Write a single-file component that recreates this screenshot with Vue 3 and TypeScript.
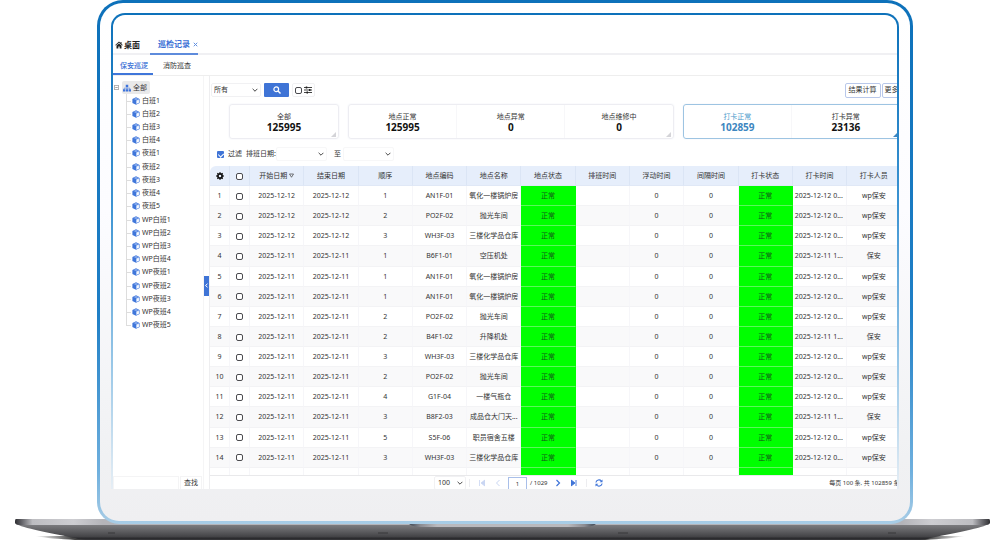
<script setup lang="ts">
import { ref } from 'vue'

interface PatrolRow {
  no: number | string
  start: string
  end: string
  order: number | string
  code: string
  name: string
  punch: string
  person: string
}

const treeItems: string[] = [
  '白班1', '白班2', '白班3', '白班4',
  '夜班1', '夜班2', '夜班3', '夜班4', '夜班5',
  'WP白班1', 'WP白班2', 'WP白班3', 'WP白班4',
  'WP夜班1', 'WP夜班2', 'WP夜班3', 'WP夜班4', 'WP夜班5',
]

const columns: string[] = [
  '开始日期', '结束日期', '顺序', '地点编码', '地点名称', '地点状态',
  '排班时间', '浮动时间', '间隔时间', '打卡状态', '打卡时间', '打卡人员',
]

const early = '2025-12-11 1...'
const late = '2025-12-12 0...'

const source: [string, number, string, string, string, string][] = [
  ['2025-12-12', 1, 'AN1F-01', '氧化一楼锅炉房', late, 'wp保安'],
  ['2025-12-12', 2, 'PO2F-02', '抛光车间', late, 'wp保安'],
  ['2025-12-12', 3, 'WH3F-03', '三楼化学品仓库', late, 'wp保安'],
  ['2025-12-11', 1, 'B6F1-01', '空压机处', early, '保安'],
  ['2025-12-11', 1, 'AN1F-01', '氧化一楼锅炉房', late, 'wp保安'],
  ['2025-12-11', 1, 'AN1F-01', '氧化一楼锅炉房', late, 'wp保安'],
  ['2025-12-11', 2, 'PO2F-02', '抛光车间', late, 'wp保安'],
  ['2025-12-11', 2, 'B4F1-02', '升降机处', early, '保安'],
  ['2025-12-11', 3, 'WH3F-03', '三楼化学品仓库', late, 'wp保安'],
  ['2025-12-11', 2, 'PO2F-02', '抛光车间', late, 'wp保安'],
  ['2025-12-11', 4, 'G1F-04', '一楼气瓶仓', late, 'wp保安'],
  ['2025-12-11', 3, 'B8F2-03', '成品仓大门天...', early, '保安'],
  ['2025-12-11', 5, 'S5F-06', '职员宿舍五楼', late, 'wp保安'],
  ['2025-12-11', 3, 'WH3F-03', '三楼化学品仓库', late, 'wp保安'],
]

const rows: PatrolRow[] = source.map(([date, order, code, name, punch, person], i) => ({
  no: i + 1, start: date, end: date, order, code, name, punch, person,
}))

const cards = [
  { size: 'one', active: false, items: [{ label: '全部', value: '125995' }] },
  {
    size: 'three',
    active: false,
    items: [
      { label: '地点正常', value: '125995' },
      { label: '地点异常', value: '0' },
      { label: '地点维修中', value: '0' },
    ],
  },
  {
    size: 'two',
    active: true,
    items: [
      { label: '打卡正常', value: '102859' },
      { label: '打卡异常', value: '23136' },
    ],
  },
]

const filterOn = ref(true)
const page = ref('1')
</script>

<template>
  <div class="device">
    <div class="lid">
      <main class="screen">
        <nav class="tabs" aria-label="页面">
          <a href="#" class="tab home">
            <svg class="i8" viewBox="0 0 16 16"><path d="M8 1 0.5 8l1 1.2L8 3.4l6.500 5.800 1-1.200L13 5.600V2h-2v1.800zM8 4.800 3 9.200V15h3.700v-4h2.600v4H13V9.200z" fill="#222" /></svg>
            <span>桌面</span>
          </a>
          <a href="#" class="tab current"><span>巡检记录</span>
            <svg class="i5" viewBox="0 0 10 10"><path d="M1.500 1.500l7 7M8.500 1.500l-7 7" stroke="#5f8fe0" stroke-width="2" /></svg>
          </a>
        </nav>
        <nav class="subtabs" aria-label="巡查类型">
          <a href="#" class="subtab on">保安巡逻</a>
          <a href="#" class="subtab">消防巡查</a>
        </nav>

        <div class="body">
          <aside class="side">
            <div class="root">
              <svg class="i5" viewBox="0 0 10 10"><path d="M.7.7h8.600v8.600H.7zM2.500 5h5" fill="none" stroke="#777" stroke-width="1.300" /></svg>
              <span class="rootlabel">
                <svg class="i8" viewBox="0 0 16 16"><path d="M5.500 1.500h5v4.500h-5zM0 10.500h4.600V15H0zM5.700 10.500h4.600V15H5.700zM11.400 10.500H16V15h-4.600z" fill="#3c73dc" /><path d="M8 5v6M2.300 11V8.200h11.400V11" fill="none" stroke="#3c73dc" stroke-width="1.200" /></svg>
                <span>全部</span>
              </span>
            </div>
            <ul class="tree">
              <li v-for="t in treeItems" :key="t">
                <svg class="i8" viewBox="0 0 16 16"><path d="M8 .6 15.200 3.800v8.400L8 15.600.8 12.200V3.800z" fill="#3f76da" /><path d="M8.500 7.200 14.200 4.700v6.900L8.500 14.200z" fill="#dbe7fb" /><path d="M10 9.200l3-1.300v3.200l-3 1.400z" fill="#fff" /><path d="M3 4.100 8 2l5 2.100L8 6.200z" fill="#8fb1ee" /></svg>
                <span>{{ t }}</span>
              </li>
            </ul>
            <form class="find" @submit.prevent>
              <input type="text" aria-label="查找内容" />
              <button type="submit">查找</button>
            </form>
          </aside>

          <div class="splitter">
            <button type="button" class="collapse" aria-label="收起">
              <svg class="i5" viewBox="0 0 10 10"><path d="M7 1.500 3 5l4 3.500" fill="none" stroke="#fff" stroke-width="2" /></svg>
            </button>
          </div>

          <section class="main">
            <div class="toolbar">
              <span class="select wide">
                <select aria-label="范围"><option>所有</option></select>
                <svg class="chev" viewBox="0 0 10 10"><path d="M1 3l4 4 4-4" fill="none" stroke="#444" stroke-width="1.600" /></svg>
              </span>
              <button type="button" class="search" aria-label="搜索">
                <svg class="i8" viewBox="0 0 16 16"><circle cx="6.500" cy="6.500" r="4.700" fill="none" stroke="#fff" stroke-width="2.400" /><path d="M10 10l5 5" stroke="#fff" stroke-width="2.800" /></svg>
              </button>
              <span class="options">
                <input type="checkbox" class="box" aria-label="多选" />
                <button type="button" class="plain" aria-label="设置">
                  <svg class="i8" viewBox="0 0 16 16"><path d="M0 3h16M0 8h16M0 13h16" stroke="#222" stroke-width="1.700" /><path d="M3.500 1h3v4h-3zM10 6h3v4h-3zM5 11h3v4H5z" fill="#222" /></svg>
                </button>
              </span>
              <span class="grow"></span>
              <button type="button" class="outline">结果计算</button>
              <button type="button" class="outline">更多</button>
            </div>

            <div class="cards">
              <div v-for="c in cards" :key="c.size" class="card" :class="[c.size, { active: c.active }]">
                <div v-for="(s, i) in c.items" :key="s.label" class="stat" :class="{ chosen: c.active && i === 0 }">
                  <span class="label">{{ s.label }}</span>
                  <strong>{{ s.value }}</strong>
                </div>
              </div>
            </div>

            <div class="filters">
              <label class="check"><input v-model="filterOn" type="checkbox" class="tick" /><span>过滤</span></label>
              <label for="from">排班日期:</label>
              <span class="select date">
                <select id="from"><option></option></select>
                <svg class="chev" viewBox="0 0 10 10"><path d="M1 3l4 4 4-4" fill="none" stroke="#444" stroke-width="1.600" /></svg>
              </span>
              <label for="to" class="to">至</label>
              <span class="select date last">
                <select id="to"><option></option></select>
                <svg class="chev" viewBox="0 0 10 10"><path d="M1 3l4 4 4-4" fill="none" stroke="#444" stroke-width="1.600" /></svg>
              </span>
            </div>

            <div class="gridview">
              <table>
                <colgroup><col class="narrow" /><col class="narrow" /><col v-for="c in columns" :key="c" /></colgroup>
                <thead>
                  <tr>
                    <th>
                      <svg class="i8" viewBox="0 0 16 16"><circle cx="8" cy="8" r="4.200" fill="none" stroke="#111" stroke-width="3.400" /><path d="M8 .5v3M8 12.500v3M.5 8h3M12.500 8h3M2.700 2.700l2 2M11.300 11.300l2 2M13.300 2.700l-2 2M4.700 11.300l-2 2" stroke="#111" stroke-width="2.800" /></svg>
                    </th>
                    <th><input type="checkbox" class="box" aria-label="全选" /></th>
                    <th v-for="(c, i) in columns" :key="c">{{ c }}<svg v-if="i === 0" class="sort" viewBox="0 0 10 10"><path d="M1 2h8L5 8.500z" fill="none" stroke="#333" stroke-width="1.300" /></svg></th>
                  </tr>
                </thead>
                <tbody>
                  <tr v-for="r in rows" :key="r.no">
                    <td>{{ r.no }}</td>
                    <td><input type="checkbox" class="box" :aria-label="`选择第${r.no}行`" /></td>
                    <td>{{ r.start }}</td>
                    <td>{{ r.end }}</td>
                    <td>{{ r.order }}</td>
                    <td>{{ r.code }}</td>
                    <td>{{ r.name }}</td>
                    <td class="ok">正常</td>
                    <td></td>
                    <td>0</td>
                    <td>0</td>
                    <td class="ok">正常</td>
                    <td class="left">{{ r.punch }}</td>
                    <td>{{ r.person }}</td>
                  </tr>
                  <tr>
                    <td></td>
                    <td><input type="checkbox" class="box" aria-label="选择第15行" /></td>
                    <td v-for="n in 12" :key="n" :class="{ ok: n === 6 || n === 10 }"></td>
                  </tr>
                </tbody>
              </table>
            </div>

            <div class="pager">
              <span class="select size">
                <select aria-label="每页条数"><option>100</option></select>
                <svg class="chev" viewBox="0 0 10 10"><path d="M1 3l4 4 4-4" fill="none" stroke="#444" stroke-width="1.600" /></svg>
              </span>
              <span class="bar"></span>
              <button type="button" class="plain" aria-label="首页" disabled><svg class="i8" viewBox="0 0 16 16"><path d="M3 2v12M13 2.500 6 8l7 5.500zM13 2v12" fill="#c9d6f3" stroke="#c9d6f3" stroke-width="1.600" /></svg></button>
              <button type="button" class="plain" aria-label="上一页" disabled><svg class="i8" viewBox="0 0 16 16"><path d="M11 2 5 8l6 6" fill="none" stroke="#c9d6f3" stroke-width="2" /></svg></button>
              <input v-model="page" type="text" class="page" aria-label="页码" />
              <span class="total">/ 1029</span>
              <button type="button" class="plain" aria-label="下一页"><svg class="i8" viewBox="0 0 16 16"><path d="M5 2l6 6-6 6" fill="none" stroke="#3f74d8" stroke-width="2.400" /></svg></button>
              <button type="button" class="plain" aria-label="末页"><svg class="i8" viewBox="0 0 16 16"><path d="M12 2v12M3 2.500 10 8l-7 5.500zM3 2v12" fill="#3f74d8" stroke="#3f74d8" stroke-width="1.800" /></svg></button>
              <span class="bar"></span>
              <button type="button" class="plain" aria-label="刷新"><svg class="i8" viewBox="0 0 16 16"><path d="M1.800 7a6.300 6.300 0 0 1 11-3M14.200 9a6.300 6.300 0 0 1-11 3" fill="none" stroke="#3f74d8" stroke-width="2.200" /><path d="M15 .8v5.700H9.300zM1 15.200V9.500h5.700z" fill="#3f74d8" /></svg></button>
              <span class="grow"></span>
              <span class="summary">每页 100 条, 共 102859 条</span>
            </div>
          </section>
        </div>
      </main>
    </div>

    <svg class="base" viewBox="0 0 1000 26" preserveAspectRatio="none" aria-hidden="true">
      <defs>
        <linearGradient id="edge" x1="0" x2="1" y1="0" y2="0">
          <stop offset="0" stop-color="#2f2f33" /><stop offset="0.008" stop-color="#6b6b70" /><stop offset="0.018" stop-color="#bdbdc1" />
          <stop offset="0.060" stop-color="#cdcdd1" /><stop offset="0.090" stop-color="#b4b4b9" /><stop offset="0.910" stop-color="#b4b4b9" />
          <stop offset="0.940" stop-color="#cdcdd1" /><stop offset="0.982" stop-color="#bdbdc1" /><stop offset="0.992" stop-color="#6b6b70" /><stop offset="1" stop-color="#2f2f33" />
        </linearGradient>
        <linearGradient id="hull" x1="0" x2="0" y1="0" y2="1">
          <stop offset="0" stop-color="#858588" /><stop offset="0.450" stop-color="#616164" /><stop offset="0.800" stop-color="#444447" /><stop offset="0.900" stop-color="#29292c" /><stop offset="1" stop-color="#3a3a3d" />
        </linearGradient>
        <linearGradient id="notch" x1="0" x2="1" y1="0" y2="0">
          <stop offset="0" stop-color="#3c4653" /><stop offset="0.060" stop-color="#8b8b90" /><stop offset="0.150" stop-color="#b9b9bd" />
          <stop offset="0.850" stop-color="#b9b9bd" /><stop offset="0.940" stop-color="#8b8b90" /><stop offset="1" stop-color="#3c4653" />
        </linearGradient>
        <linearGradient id="shade" x1="0" x2="1" y1="0" y2="0">
          <stop offset="0" stop-color="#555" stop-opacity="0" /><stop offset="0.040" stop-color="#444" /><stop offset="0.960" stop-color="#444" /><stop offset="1" stop-color="#555" stop-opacity="0" />
        </linearGradient>
      </defs>
      <path d="M35 18H965C955 20 940 21 925 22H75C60 21 45 20 35 18z" fill="url(#shade)" />
      <path d="M15 5C18 9 45 14 75 20Q80 22 90 22H915Q925 22 930 20C960 14 987 9 990 5z" fill="url(#hull)" />
      <path d="M16 1H989Q990 1 990 3V5Q989 7 986 7H19Q16 7 15 5V3Q15 1 16 1z" fill="url(#edge)" />
      <path d="M409 6H596C592 9 585 9 580 9H425C420 9 413 9 409 6z" fill="url(#notch)" />
      <path d="M108 15h7M378 15h10M618 15h10M888 15h8" stroke="#38383b" stroke-width="1" />
    </svg>
  </div>
</template>

<style>
body {
  background: #fff;
}
</style>

<style scoped>
* {
  box-sizing: border-box;
}

.device {
  display: flex;
  flex-direction: column;
  overflow: hidden;
  font-family: "Noto Sans", "Noto Sans CJK SC", sans-serif;
  font-size: 7px;
  line-height: 10px;
  color: #333;
}

.lid {
  position: relative;
  z-index: 1;
  margin: 0 8.750% 0 9.700%;
  padding: 10px 11px 32px;
  border: 3px solid transparent;
  border-radius: 26px 26px 22px 22px;
  background:
    linear-gradient(#fff, #fcfcff 40%, #f0f1f3 88%, #efeff1) padding-box,
    linear-gradient(#0d71ba, #1f7fc6 60%, #6fb0de 90%, #a9cde6) border-box;
}

.screen {
  overflow: hidden;
  padding-top: 20px;
  border: 2px solid transparent;
  border-bottom: 0;
  border-radius: 14px 14px 0 0;
  background:
    linear-gradient(#fff, #fff) padding-box,
    linear-gradient(#0d71ba, #3b93d2 40%, #9cc9e8 75%, #e6eef5) border-box;
}

a {
  color: inherit;
  text-decoration: none;
}

button,
input,
select {
  margin: 0;
  padding: 0;
  border: 0;
  background: none;
  color: inherit;
  font: inherit;
}

svg {
  display: block;
  flex: none;
}

.i8 {
  width: 8px;
  height: 8px;
}

.i5 {
  width: 5px;
  height: 5px;
}

.grow {
  flex: 1;
}

.tabs {
  display: flex;
  height: 20px;
  border-bottom: 2px solid #f0f0f3;
  font-size: 8px;
  font-weight: 700;
}

.tab {
  display: flex;
  align-items: center;
  gap: 1px;
  height: 20px;
  padding: 0 10px 0 2px;
  color: #222;
}

.tab.current {
  gap: 3px;
  padding: 0 0 0 8px;
  border-bottom: 2px solid #5e8bdc;
  color: #3d72d6;
}

.subtabs {
  display: flex;
  height: 21px;
  border-bottom: 1px solid #eee;
}

.subtab {
  display: flex;
  align-items: center;
  height: 20px;
  padding: 3px 5px 0 10px;
  border-bottom: 2px solid transparent;
}

.subtab.on {
  padding-left: 7px;
  border-color: #3f76da;
  color: #3d72d6;
  font-weight: 500;
}

.body {
  display: flex;
}

.side {
  display: flex;
  flex: none;
  flex-direction: column;
  width: 91px;
  padding-top: 5px;
  border-right: 1px solid #f5f5f6;
}

.root {
  display: flex;
  align-items: center;
  gap: 3px;
  padding-left: 1px;
}

.rootlabel {
  display: flex;
  align-items: center;
  gap: 2px;
  height: 13px;
  padding: 0 3px 0 1px;
  border-radius: 2px;
  background: #e9e9ea;
}

.tree {
  display: grid;
  grid-auto-rows: 1fr;
  height: 238px;
  margin: 0;
  padding: 0 0 0 13px;
  list-style: none;
}

.tree li {
  position: relative;
  display: flex;
  align-items: center;
  gap: 2px;
  padding-left: 6px;
  white-space: nowrap;
}

.tree li::before {
  content: "";
  position: absolute;
  left: 0;
  top: 0;
  width: 4px;
  height: 50%;
  border-left: 1px solid #ddd;
  border-bottom: 1px solid #ddd;
}

.tree li:not(:last-child)::after {
  content: "";
  position: absolute;
  left: 0;
  top: 50%;
  bottom: 0;
  border-left: 1px solid #ddd;
}

.find {
  display: flex;
  gap: 1px;
  margin-top: auto;
  height: 13px;
}

.find input {
  flex: 1;
  min-width: 0;
  border: 1px solid #f4f4f5;
  border-bottom: 0;
}

.find button {
  width: 22px;
  margin-right: 1px;
  border: 1px solid #f4f4f5;
  border-bottom: 0;
}

.splitter {
  display: flex;
  flex: none;
  align-items: center;
  width: 6px;
  border-right: 1px solid #eeeef0;
}

.collapse {
  display: flex;
  align-items: center;
  width: 5px;
  height: 20px;
  margin-top: 6px;
  flex: none;
  background: #3f74d6;
}

.main {
  flex: 1;
  min-width: 0;
}

.toolbar {
  display: flex;
  align-items: center;
  gap: 3px;
  height: 28px;
  margin-right: -5px;
  padding: 0 0 0 1px;
}

.select {
  position: relative;
  display: inline-flex;
  flex: none;
  height: 14px;
  border: 1px solid #f1f1f3;
  border-radius: 2px;
}

.select select {
  width: 100%;
  padding-left: 2px;
  appearance: none;
  outline: 0;
}

.chev {
  position: absolute;
  top: 3px;
  right: 2px;
  width: 6px;
  height: 6px;
  pointer-events: none;
}

.wide {
  width: 50px;
}

.search {
  display: flex;
  align-items: center;
  justify-content: center;
  width: 25px;
  height: 14px;
  border-radius: 1px;
  background: #3f74d6;
}

.options {
  display: flex;
  align-items: center;
  gap: 2px;
  height: 14px;
  padding: 0 2px;
  border: 1px solid #f1f1f3;
  border-radius: 2px;
}

.box {
  display: inline-block;
  width: 7px;
  height: 7px;
  border: 1px solid #4b4b4f;
  border-radius: 2px;
  background: #fff;
  appearance: none;
  vertical-align: middle;
}

.plain {
  display: flex;
  flex: none;
}

.outline {
  height: 15px;
  padding: 0 3px;
  border: 1px solid #b9c8ea;
  border-radius: 2px;
  white-space: nowrap;
}

.outline + .outline {
  margin-left: -2px;
  padding: 0 2px;
}

.cards {
  display: flex;
  gap: 9px;
  margin: 0 -4px 0 19px;
}

.card {
  position: relative;
  display: flex;
  height: 35px;
  border: 1px solid #ededf2;
  border-radius: 3px;
  box-shadow: 0 0 2px #eef0f6;
}

.card::after {
  content: "";
  position: absolute;
  right: 2px;
  bottom: 1px;
  border: solid transparent;
  border-width: 5px 0 0 5px;
  border-bottom: 5px solid #d4d4d8;
  border-top-width: 0;
}

.card.active {
  border-color: #9dc4e2;
}

.card.active::after {
  border-bottom-color: #3e86c0;
}

.one {
  flex: 1;
}

.three {
  flex: 3;
}

.two {
  flex: 2;
}

.stat {
  display: flex;
  flex: 1;
  flex-direction: column;
  align-items: center;
  padding-top: 7px;
}

.stat + .stat {
  border-left: 1px solid #f7f7f9;
}

.stat strong {
  font-size: 10px;
  line-height: 11px;
  color: #111;
}

.stat.chosen .label {
  color: #4d9acb;
}

.stat.chosen strong {
  color: #3e86c0;
}

.filters {
  display: flex;
  align-items: center;
  height: 27px;
  padding: 3px 0 0 7px;
}

.check {
  display: flex;
  align-items: center;
  gap: 4px;
  margin-right: 4px;
}

.tick {
  position: relative;
  width: 7px;
  height: 7px;
  border-radius: 1px;
  appearance: none;
}

.tick:checked {
  background: #3f74d6;
}

.tick:checked::after {
  content: "";
  position: absolute;
  left: 2px;
  top: 1px;
  width: 3px;
  height: 4px;
  border: solid #fff;
  border-width: 0 1px 1px 0;
  transform: rotate(45deg);
}

.date {
  width: 51px;
  border-color: #f7f7f8;
}

.to {
  margin: 0 2px 0 7px;
}

.gridview {
  height: 310px;
  overflow: hidden;
  border-radius: 6px 0 0;
  border-bottom: 1px solid #e9e9eb;
}

table {
  width: calc(100% + 5px);
  height: 322px;
  border-spacing: 0;
  table-layout: fixed;
}

.narrow {
  width: 20px;
}

th,
td {
  height: 20px;
  padding: 1px 0 0;
  border-right: 1px solid #f6f6f9;
  border-bottom: 1px solid #f3f3f5;
  overflow: hidden;
  font-weight: 400;
  text-align: center;
  white-space: nowrap;
}

th {
  border-right-color: #dbe5f5;
  border-bottom-color: #e0e8f6;
  background: #e6eefb;
}

th > .i8 {
  margin: 0 auto;
}

.sort {
  display: inline-block;
  width: 5px;
  height: 5px;
  margin-left: 2px;
}

tbody tr:nth-child(even) td {
  background: #f9f9fa;
}

tbody tr td.ok {
  border-right-color: #0f0;
  border-bottom-color: #5cf65c;
  background: #0f0;
  color: #14591a;
}

td.left {
  padding-left: 2px;
  text-align: left;
}

.pager {
  display: flex;
  align-items: center;
  height: 13px;
  gap: 8px;
  padding: 1px 0 0 224px;
  margin-right: -3px;
  overflow: hidden;
}

.size {
  width: 32px;
  margin-right: -5px;
}

.size select {
  padding-left: 3px;
}

.bar {
  width: 1px;
  height: 8px;
  background: #ededf0;
}

.page {
  align-self: flex-start;
  width: 19px;
  height: 13px;
  margin: 0 -5px 0 -2px;
  border: 1px solid #a9bfe9;
  font-size: 6px;
  text-align: center;
}

.total,
.summary {
  font-size: 6px;
  white-space: nowrap;
}

.total {
  margin-right: -2px;
}

.base {
  width: 100%;
  height: 26px;
  margin-top: -6px;
}
</style>
